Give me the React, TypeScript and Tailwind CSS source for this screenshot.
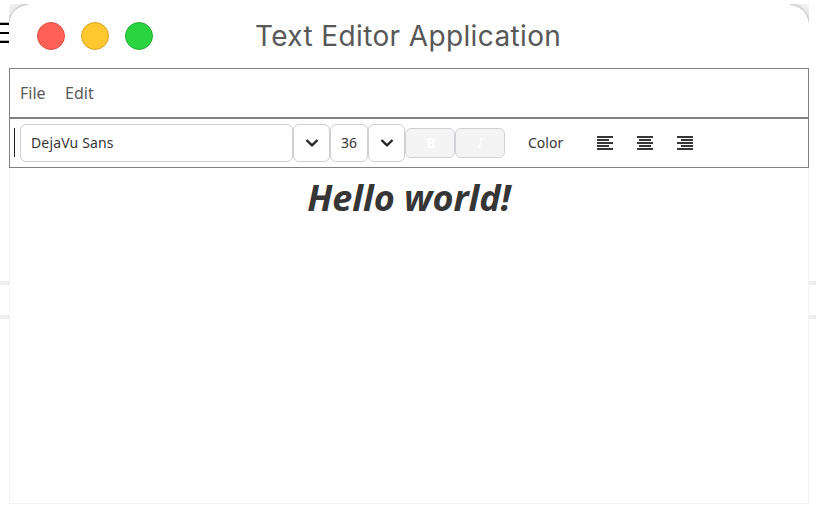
import React from "react";

const UI = "font-['Noto_Sans',sans-serif]";

function Corner({ flip = false }: { flip?: boolean }) {
  return (
    <svg width="20" height="20" viewBox="0 0 20 20" className={flip ? "-scale-x-100" : ""}>
      <defs>
        <linearGradient id={flip ? "cr" : "cl"} x1="0" y1="0" x2="1" y2="1">
          <stop offset="0" stopColor="#fafafa" />
          <stop offset="0.35" stopColor="#e4e4e4" />
        </linearGradient>
      </defs>
      <path d="M0 0H20A20 20 0 0 0 0 18Z" fill={flip ? "url(#cr)" : "url(#cl)"} />
      <path d="M0 18A20 20 0 0 1 19 0.3" fill="none" stroke="#cccccc" strokeWidth="1.2" />
    </svg>
  );
}

function Chevron() {
  return (
    <svg width="14" height="10" viewBox="0 0 14 10" fill="none" stroke="#262626" strokeWidth="2.4">
      <path d="M1.5 2L7 7.3L12.5 2" strokeLinejoin="round" />
    </svg>
  );
}

function Align({ x }: { x: number }) {
  return (
    <svg width="16" height="14" viewBox="0 0 16 14" fill="#363636">
      <rect x="0" y="0" width="16" height="2" />
      <rect x={x} y="3" width="12" height="2" />
      <rect x="0" y="6" width="16" height="2" />
      <rect x={x} y="9" width="12" height="2" />
      <rect x="0" y="12" width="16" height="2" />
    </svg>
  );
}

function Field({ className, children }: { className: string; children: React.ReactNode }) {
  return (
    <div className={`flex h-[38px] shrink-0 items-center rounded-md border border-[#cfcfcf] bg-white ${className}`}>
      {children}
    </div>
  );
}

export default function App() {
  return (
    <div className={`flex h-[507px] w-[816px] overflow-hidden bg-white ${UI}`}>
      <div className="flex w-[9px] shrink-0 flex-col">
        <div className="mt-[22px] flex h-[21px] flex-col justify-between">
          <div className="h-[3px] border-t border-[#b5b5b5] bg-black" />
          <div className="h-[2px] bg-black" />
          <div className="h-[3px] border-t border-[#b5b5b5] bg-black" />
        </div>
        <div className="mt-[238px] h-[38px] border-y-4 border-[#eeeeee]" />
      </div>
      <div className="mt-1 flex h-[500px] w-[800px] shrink-0 flex-col bg-[#fefefe]">
        <header className="flex h-16 shrink-0 items-start">
          <Corner />
          <div className="mt-[18px] ml-2 flex gap-4">
            <div className="size-7 rounded-full border border-[#df4f47] bg-[#ff6157]" />
            <div className="size-7 rounded-full border border-[#d9a528] bg-[#ffc82e]" />
            <div className="size-7 rounded-full border border-[#25ad34] bg-[#2ad441]" />
          </div>
          <h1 className="mt-[11px] ml-[102px] w-[320px] font-['Inter',sans-serif] text-[28px] leading-[42px] tracking-[0.37px] whitespace-nowrap text-[#585858]">
            Text Editor Application
          </h1>
          <div className="ml-auto h-5">
            <Corner flip />
          </div>
        </header>
        <nav className="flex h-[50px] shrink-0 items-center gap-[19.5px] border border-[#808080] pl-[10px] text-base text-[#5a5a5a]">
          <span>File</span>
          <span>Edit</span>
        </nav>
        <div className="flex h-[50px] shrink-0 items-center border border-[#808080] pl-1 text-sm text-[#363636]">
          <div className="mr-[5px] mb-0.5 h-[29px] w-px bg-[#202020]" />
          <Field className="w-[273px] pl-[10px] tracking-[0.15px]">DejaVu Sans</Field>
          <Field className="w-[37px] justify-center"><Chevron /></Field>
          <Field className="w-[38px] justify-center">36</Field>
          <Field className="w-[37px] justify-center"><Chevron /></Field>
          <button className="h-[30px] w-[50px] rounded-md border border-[#cfd1d6] bg-[#f4f4f4] pl-0.5 font-bold text-white">B</button>
          <button className="h-[30px] w-[50px] rounded-md border border-[#cfd1d6] bg-[#f4f4f4] text-white italic">I</button>
          <span className="ml-[23px] w-[69px]">Color</span>
          <div className="flex gap-6">
            <Align x={0} />
            <Align x={2} />
            <Align x={4} />
          </div>
        </div>
        <main className="grow border border-t-0 border-[#f3f3f3] pt-[5px] text-center text-[36px] leading-[49px] font-bold tracking-[-0.05px] text-[#363636] italic">
          Hello world!
        </main>
      </div>
      <div className="w-[7px] shrink-0 pt-[281px]">
        <div className="h-[38px] border-y-4 border-[#eeeeee]" />
      </div>
    </div>
  );
}
